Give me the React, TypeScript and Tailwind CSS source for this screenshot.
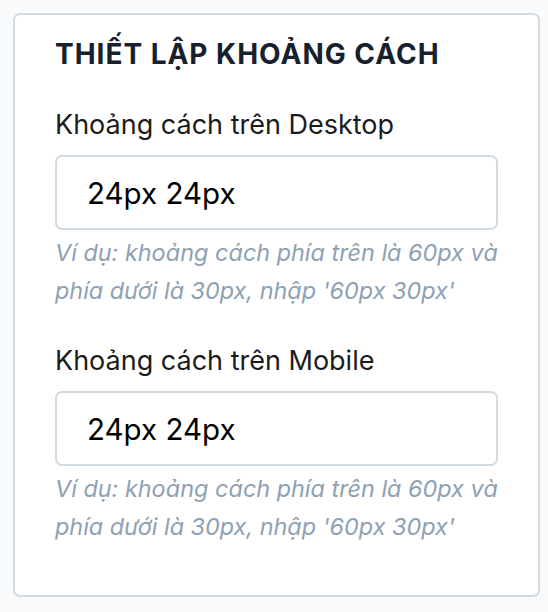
import React, { useState } from "react";

const Field = ({
  label,
  value,
  onChange,
}: {
  label: string;
  value: string;
  onChange: (v: string) => void;
}) => (
  <div className="flex flex-col">
    <label className="text-[27px] leading-[40px] text-[#1c1c1e]">{label}</label>
    <input
      value={value}
      onChange={(e) => onChange(e.target.value)}
      className="mt-[10px] h-[75px] w-full rounded-[7px] border-2 border-[#d2dae2] bg-white px-[30px] text-[29.5px] text-black outline-none"
    />
    <p className="mt-[4px] whitespace-nowrap text-[23.4px] italic leading-[38px] text-[#8ea1b4]">
      Ví dụ: khoảng cách phía trên là 60px và
      <br />
      phía dưới là 30px, nhập '60px 30px'
    </p>
  </div>
);

export default function App() {
  const [desktop, setDesktop] = useState("24px 24px");
  const [mobile, setMobile] = useState("24px 24px");

  return (
    <div
      className="min-h-[612px] bg-[#f8fafc] pt-[13px] pl-[13px] pr-[8px]"
      style={{ fontFamily: 'Inter, "Noto Sans", sans-serif' }}
    >
      <div className="w-[527px] rounded-[7px] border-2 border-[#d2dae2] bg-white px-[40px] pt-[19px] pb-[49px]">
        <h2 className="text-[28px] font-bold uppercase leading-[40px] tracking-[0.035em] text-[#17212e]">
          Thiết lập khoảng cách
        </h2>

        {/* Desktop */}
        <div className="mt-[31px]">
          <Field label="Khoảng cách trên Desktop" value={desktop} onChange={setDesktop} />
        </div>

        {/* Mobile */}
        <div className="mt-[31px]">
          <Field label="Khoảng cách trên Mobile" value={mobile} onChange={setMobile} />
        </div>
      </div>
    </div>
  );
}
